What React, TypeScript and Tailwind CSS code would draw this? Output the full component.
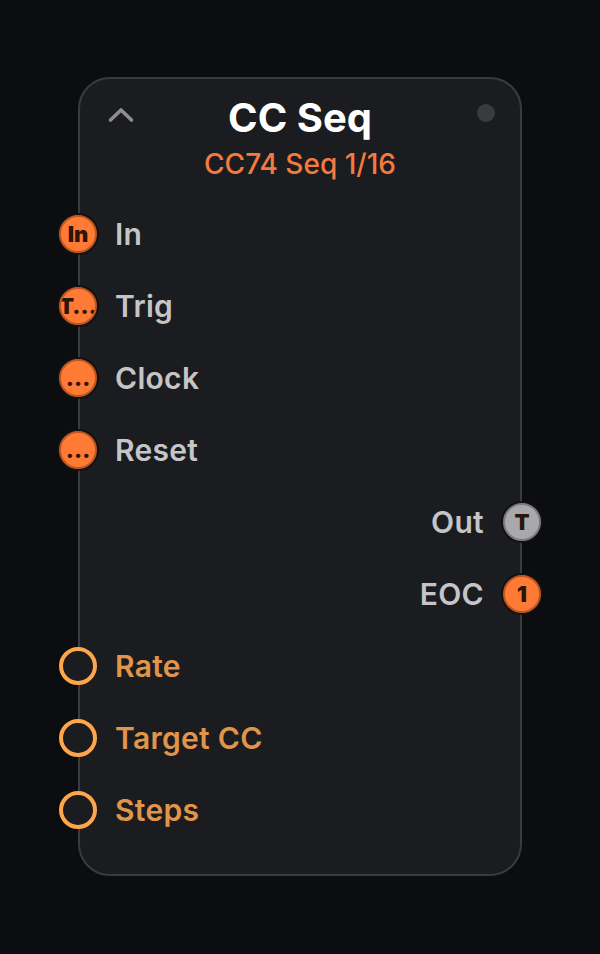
import React from 'react';

type Port = {
  label: string;
  badge: string;
  side: 'left' | 'right';
  kind: 'gate' | 'trig' | 'param';
};

const ports: Port[] = [
  { label: 'In', badge: 'In', side: 'left', kind: 'gate' },
  { label: 'Trig', badge: 'T…', side: 'left', kind: 'gate' },
  { label: 'Clock', badge: '…', side: 'left', kind: 'gate' },
  { label: 'Reset', badge: '…', side: 'left', kind: 'gate' },
  { label: 'Out', badge: 'T', side: 'right', kind: 'trig' },
  { label: 'EOC', badge: '1', side: 'right', kind: 'gate' },
  { label: 'Rate', badge: '', side: 'left', kind: 'param' },
  { label: 'Target CC', badge: '', side: 'left', kind: 'param' },
  { label: 'Steps', badge: '', side: 'left', kind: 'param' },
];

const Handle: React.FC<{ port: Port }> = ({ port }) => {
  const pos = port.side === 'left' ? '-left-[21px]' : '-right-[21px]';
  if (port.kind === 'param') {
    return (
      <div
        className={`absolute ${pos} top-1/2 -translate-y-1/2 w-[38px] h-[38px] rounded-full border-4 border-[#ffa64a] bg-[#1b1c1f]`}
      />
    );
  }
  const fill =
    port.kind === 'trig'
      ? 'bg-[#a9a9ab] border-[#7c7c80]'
      : 'bg-[#ff7a35] border-[#c0561f]';
  return (
    <div
      className={`absolute ${pos} top-1/2 -translate-y-1/2 w-[38px] h-[38px] rounded-full border-2 ${fill} ring-2 ring-[#111214] flex items-center justify-center overflow-hidden`}
    >
      <span className="text-[22px] leading-none font-black text-[#2e150a] whitespace-nowrap">
        {port.badge}
      </span>
    </div>
  );
};

const App: React.FC = () => {
  return (
    <div
      className="w-[600px] h-[954px] bg-[#0c0d10] flex justify-center pt-[77px]"
      style={{ fontFamily: 'Inter, "Noto Sans", sans-serif' }}
    >
      <div className="relative w-[444px] h-[799px] rounded-[32px] border-2 border-[#3a3b3f] bg-[#1b1c1f] flex flex-col">
        {/* Header */}
        <div className="relative flex flex-col items-center pt-[15px]">
          <svg
            className="absolute left-[27px] top-[27px]"
            width="28"
            height="18"
            viewBox="0 0 28 18"
            fill="none"
          >
            <path
              d="M3.5 14 L14 4 L24.5 14"
              stroke="#8e8e92"
              strokeWidth="3.6"
              strokeLinecap="round"
              strokeLinejoin="round"
            />
          </svg>
          <div className="absolute right-[25px] top-[25px] w-[18px] h-[18px] rounded-full bg-[#3a3b3f]" />
          <h1 className="text-[40px] leading-[48px] font-bold text-white">CC Seq</h1>
          <p className="mt-[5px] text-[28px] leading-[34px] font-medium text-[#f47a3f]">CC74 Seq 1/16</p>
        </div>

        {/* Ports */}
        <div className="mt-[17px] flex flex-col">
          {ports.map((p) => (
            <div
              key={p.label}
              className={`relative h-[72px] flex items-center ${
                p.side === 'left' ? 'justify-start pl-[35px]' : 'justify-end pr-[36px]'
              }`}
            >
              <Handle port={p} />
              <span
                className={`text-[30px] leading-[36px] font-semibold tracking-[0.01em] ${
                  p.kind === 'param' ? 'text-[#e0954b]' : 'text-[#c5c5c9]'
                }`}
              >
                {p.label}
              </span>
            </div>
          ))}
        </div>
      </div>
    </div>
  );
};

export default App;
